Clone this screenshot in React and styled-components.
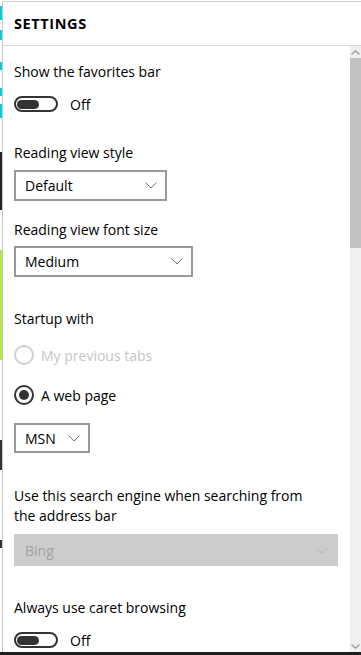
import React from "react";
import styled, { createGlobalStyle } from "styled-components";

const Global = createGlobalStyle`
  html, body { margin: 0; padding: 0; background: #fff; }
  body { font-family: "Open Sans", "Noto Sans", sans-serif; color: #000; }
`;

const Page = styled.div`
  width: 361px;
  height: 655px;
  display: flex;
  flex-direction: column;
  overflow: hidden;
  background: #fff;
`;

const Main = styled.div`
  flex: 1;
  display: flex;
  min-height: 0;
`;

const Strip = styled.div`
  width: 2px;
  flex: none;
  background: linear-gradient(
    to bottom,
    #fff 0px, #fff 6px,
    #19c3d2 6px, #19c3d2 20px, #fff 20px, #fff 30px,
    #19c3d2 30px, #19c3d2 40px, #fff 40px, #fff 62px,
    #19c3d2 62px, #19c3d2 70px, #fff 70px, #fff 88px,
    #19c3d2 88px, #19c3d2 96px, #fff 96px, #fff 104px,
    #19c3d2 104px, #19c3d2 118px, #fff 118px, #fff 152px,
    #222 152px, #222 210px, #fff 210px, #fff 250px,
    #b7e35a 250px, #b7e35a 360px, #fff 360px, #fff 440px,
    #333 440px, #333 470px, #fff 470px, #fff 540px,
    #333 540px, #333 548px, #fff 548px
  );
`;

const Panel = styled.div`
  flex: 1;
  display: flex;
  flex-direction: column;
  border-left: 1px solid #c8c8c8;
  border-top: 1px solid #cfcfcf;
  margin-top: 1px;
  min-width: 0;
`;

const Header = styled.div`
  height: 43px;
  border-bottom: 1px solid #d9d9d9;
  display: flex;
  align-items: center;
  padding-left: 11px;
`;

const Title = styled.h1`
  margin: 0;
  font-size: 14.5px;
  font-weight: 700;
  letter-spacing: 0.6px;
`;

const BodyRow = styled.div`
  flex: 1;
  display: flex;
  min-height: 0;
`;

const Content = styled.div`
  flex: 1;
  padding-left: 11px;
  overflow: hidden;
  display: flex;
  flex-direction: column;
`;

const Label = styled.div`
  font-size: 14px;
  line-height: 20px;
  margin-top: ${(p) => p.$mt || 0}px;
  width: ${(p) => (p.$w ? p.$w + "px" : "auto")};
`;

const ToggleRow = styled.div`
  display: flex;
  align-items: center;
  height: 20px;
  margin-top: ${(p) => p.$mt || 0}px;
  gap: 12px;
  font-size: 14px;
`;

const Toggle = styled.div`
  width: 44px;
  height: 16px;
  box-sizing: border-box;
  border: 2px solid #333;
  border-radius: 8px;
  display: flex;
  align-items: center;
  padding-left: 1px;
`;

const Knob = styled.div`
  width: 22px;
  height: 9px;
  border-radius: 5px;
  background: #333;
`;

const Select = styled.div`
  box-sizing: border-box;
  width: ${(p) => p.$w}px;
  height: ${(p) => p.$h || 31}px;
  margin-top: ${(p) => p.$mt || 0}px;
  border: 2px solid ${(p) => (p.$disabled ? "#cccccc" : "#999")};
  background: ${(p) => (p.$disabled ? "#cccccc" : "#fff")};
  color: ${(p) => (p.$disabled ? "#a3a3a3" : "#000")};
  display: flex;
  align-items: center;
  justify-content: space-between;
  padding: 0 8px 0 9px;
  font-size: 14px;
  flex: none;
`;

const Chevron = ({ color }) => (
  <svg width="12" height="7" viewBox="0 0 12 7">
    <polyline points="0.5,0.5 6,6 11.5,0.5" fill="none" stroke={color} strokeWidth="1" />
  </svg>
);

const RadioRow = styled.div`
  display: flex;
  align-items: center;
  gap: 7px;
  height: 20px;
  margin-top: ${(p) => p.$mt || 0}px;
  font-size: 14px;
  color: ${(p) => (p.$disabled ? "#c6c6c6" : "#000")};
`;

const Radio = styled.div`
  width: 20px;
  height: 20px;
  box-sizing: border-box;
  border-radius: 50%;
  border: 2px solid ${(p) => (p.$disabled ? "#d0d0d0" : "#333")};
  display: flex;
  align-items: center;
  justify-content: center;
  &::after {
    content: "";
    display: ${(p) => (p.$checked ? "block" : "none")};
    width: 10px;
    height: 10px;
    border-radius: 50%;
    background: #333;
  }
`;

const Scrollbar = styled.div`
  width: 11px;
  flex: none;
  background: #f0f0f0;
  display: flex;
  flex-direction: column;
`;

const ScrollArrow = styled.div`
  height: 12px;
  display: flex;
  align-items: center;
  justify-content: center;
`;

const Thumb = styled.div`
  height: 190px;
  background: #c2c2c2;
`;

const Spacer = styled.div`
  flex: 1;
`;

const BottomBar = styled.div`
  height: 3px;
  background: #1e1e1e;
  flex: none;
`;

export default function App() {
  return (
    <>
      <Global />
      <Page>
        <Main>
          <Strip />
          <Panel>
            <Header>
              <Title>SETTINGS</Title>
            </Header>
            <BodyRow>
              <Content>
                <Label $mt={16}>Show the favorites bar</Label>
                <ToggleRow $mt={12}>
                  <Toggle><Knob /></Toggle>
                  <span>Off</span>
                </ToggleRow>

                <Label $mt={29}>Reading view style</Label>
                <Select $w={153} $mt={7}>
                  <span>Default</span>
                  <Chevron color="#777" />
                </Select>

                <Label $mt={19}>Reading view font size</Label>
                <Select $w={179} $mt={6}>
                  <span>Medium</span>
                  <Chevron color="#777" />
                </Select>

                <Label $mt={32}>Startup with</Label>
                <RadioRow $mt={16} $disabled>
                  <Radio $disabled />
                  <span>My previous tabs</span>
                </RadioRow>
                <RadioRow $mt={20}>
                  <Radio $checked />
                  <span>A web page</span>
                </RadioRow>
                <Select $w={76} $mt={18} $h={30}>
                  <span>MSN</span>
                  <Chevron color="#777" />
                </Select>

                <Label $mt={33} $w={300}>
                  Use this search engine when searching from the address bar
                </Label>
                <Select $w={324} $mt={8} $h={32} $disabled>
                  <span>Bing</span>
                  <Chevron color="#b5b5b5" />
                </Select>

                <Label $mt={32}>Always use caret browsing</Label>
                <ToggleRow $mt={12}>
                  <Toggle><Knob /></Toggle>
                  <span>Off</span>
                </ToggleRow>
              </Content>
              <Scrollbar>
                <ScrollArrow>
                  <svg width="9" height="5" viewBox="0 0 9 5">
                    <polyline points="0.5,4.5 4.5,0.8 8.5,4.5" fill="none" stroke="#a0a0a0" strokeWidth="1.4" />
                  </svg>
                </ScrollArrow>
                <Thumb />
                <Spacer />
                <ScrollArrow>
                  <svg width="9" height="5" viewBox="0 0 9 5">
                    <polyline points="0.5,0.5 4.5,4.2 8.5,0.5" fill="none" stroke="#a0a0a0" strokeWidth="1.4" />
                  </svg>
                </ScrollArrow>
              </Scrollbar>
            </BodyRow>
          </Panel>
        </Main>
        <BottomBar />
      </Page>
    </>
  );
}
